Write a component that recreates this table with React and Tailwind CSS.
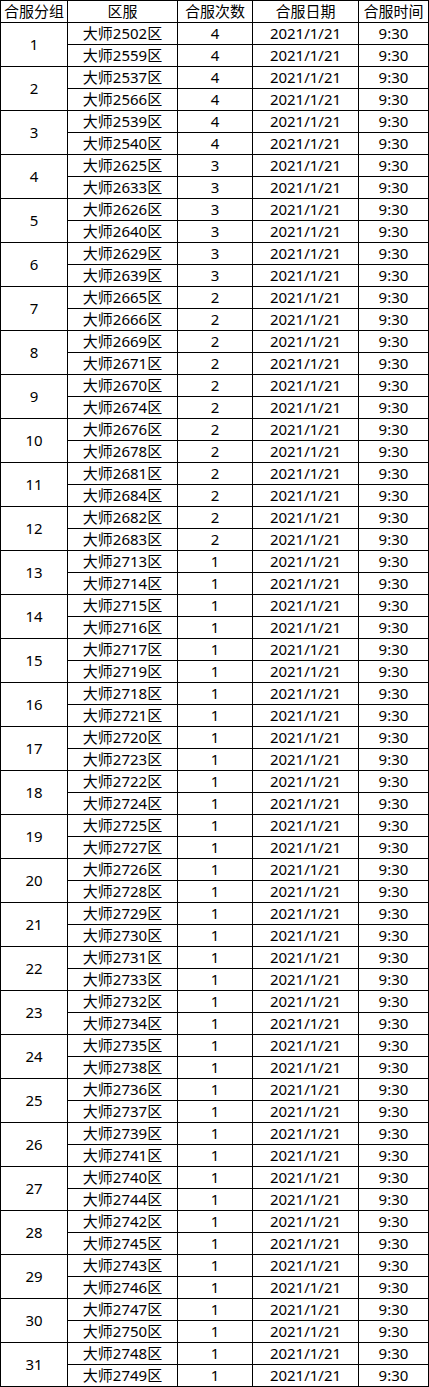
import React from 'react';

const groups = [
  [['2502', '2559'], 4],
  [['2537', '2566'], 4],
  [['2539', '2540'], 4],
  [['2625', '2633'], 3],
  [['2626', '2640'], 3],
  [['2629', '2639'], 3],
  [['2665', '2666'], 2],
  [['2669', '2671'], 2],
  [['2670', '2674'], 2],
  [['2676', '2678'], 2],
  [['2681', '2684'], 2],
  [['2682', '2683'], 2],
  [['2713', '2714'], 1],
  [['2715', '2716'], 1],
  [['2717', '2719'], 1],
  [['2718', '2721'], 1],
  [['2720', '2723'], 1],
  [['2722', '2724'], 1],
  [['2725', '2727'], 1],
  [['2726', '2728'], 1],
  [['2729', '2730'], 1],
  [['2731', '2733'], 1],
  [['2732', '2734'], 1],
  [['2735', '2738'], 1],
  [['2736', '2737'], 1],
  [['2739', '2741'], 1],
  [['2740', '2744'], 1],
  [['2742', '2745'], 1],
  [['2743', '2746'], 1],
  [['2747', '2750'], 1],
  [['2748', '2749'], 1],
];

const cell = 'flex items-center justify-center border-r border-b border-black whitespace-nowrap';

const App = () => {
  return (
    <div
      className="w-[429px] bg-white text-black text-[15px] leading-none"
      style={{ fontFamily: '"Noto Sans", "Noto Sans CJK SC", sans-serif' }}
    >
      <div className="grid grid-cols-[67px_110px_75px_106px_70px] auto-rows-[22px] border-l border-t border-black">
        {/* ── Header ── */}
        {['合服分组', '区服', '合服次数', '合服日期', '合服时间'].map((h) => (
          <div key={h} className={cell}>{h}</div>
        ))}

        {/* ── Rows: group number spans its two servers ── */}
        {groups.map(([servers, times], i) => (
          <React.Fragment key={i}>
            <div className={`${cell} row-span-2`}>{i + 1}</div>
            {servers.map((s) => (
              <React.Fragment key={s}>
                <div className={cell}>大师{s}区</div>
                <div className={cell}>{times}</div>
                <div className={cell}>2021/1/21</div>
                <div className={cell}>9:30</div>
              </React.Fragment>
            ))}
          </React.Fragment>
        ))}
      </div>
    </div>
  );
};

export default App;
